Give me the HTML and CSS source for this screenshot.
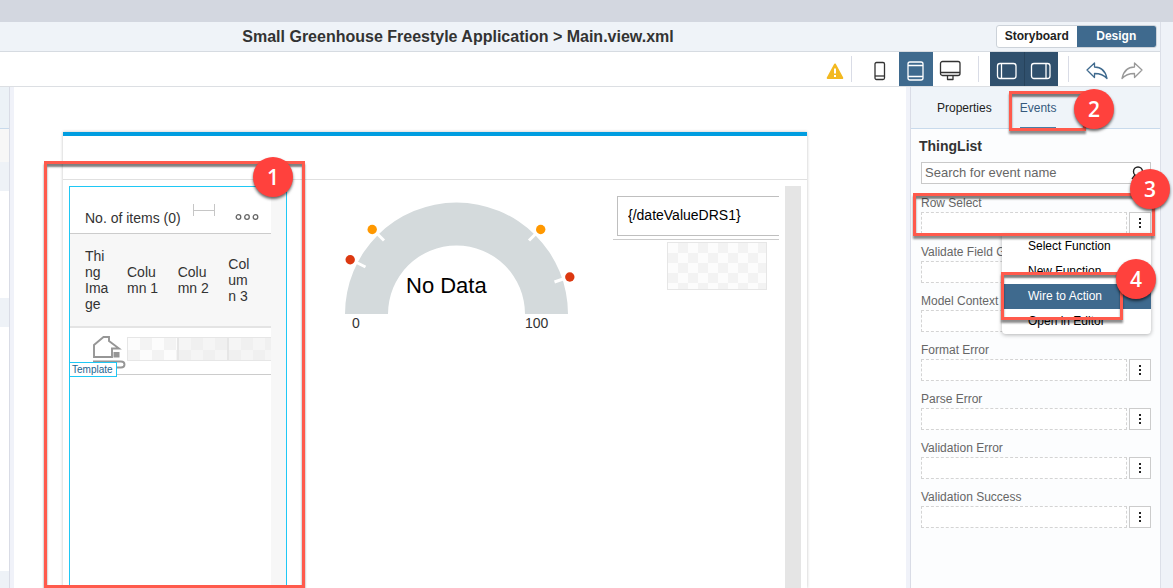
FILE: index.html
```html
<!DOCTYPE html>
<html lang="en">
<head>
<meta charset="utf-8">
<title>Small Greenhouse Freestyle Application</title>
<link rel="stylesheet" href="styles.css">
</head>
<body>
<div class="window-strip"></div>
<div class="shell">
  <div class="app">
    <header class="header">
      <h1 class="title">Small Greenhouse Freestyle Application &gt; Main.view.xml</h1>
      <div class="segmented">
        <button class="segment" type="button">Storyboard</button>
        <button class="segment segment-on" type="button">Design</button>
      </div>
    </header>
    <div class="toolbar">
      <svg class="warning" width="18" height="18" viewBox="0 0 18 18" aria-hidden="true"><path d="M9 2.500 16.300 16H1.700Z" fill="#f3b920" stroke="#f3b920" stroke-width="2" stroke-linejoin="round"/><path d="M9 6.500v5M9 13v2" stroke="#fff" stroke-width="2"/></svg>
      <span class="divider"></span>
      <button class="tool tool-phone" type="button" aria-label="Phone"><svg width="24" height="24" viewBox="0 0 24 24"><rect x="7" y="3.500" width="9.500" height="17" rx="1.500"/><path d="M7 17h9.500"/></svg></button>
      <button class="tool tool-on" type="button" aria-label="Tablet"><svg width="24" height="24" viewBox="0 0 24 24"><rect x="4" y="3" width="15" height="18" rx="2"/><path d="M4 6.500h15M4 17.500h15"/></svg></button>
      <button class="tool" type="button" aria-label="Desktop"><svg width="24" height="24" viewBox="0 0 24 24"><rect x="1.500" y="2.500" width="19.500" height="14" rx="2"/><path d="M1.500 13.500h19.500M8.500 17v3.500h5.500V17"/></svg></button>
      <span class="divider divider-wide"></span>
      <button class="tool tool-dark" type="button" aria-label="Left pane"><svg width="24" height="24" viewBox="0 0 24 24"><rect x="2.500" y="4.500" width="18.500" height="15" rx="2.500"/><path d="M6.500 4.500v15"/></svg></button>
      <button class="tool tool-dark tool-next" type="button" aria-label="Right pane"><svg width="24" height="24" viewBox="0 0 24 24"><rect x="2.500" y="4.500" width="18.500" height="15" rx="2.500"/><path d="M17 4.500v15"/></svg></button>
      <span class="divider divider-last"></span>
      <button class="tool tool-undo" type="button" aria-label="Undo"><svg width="24" height="24" viewBox="0 0 24 24"><path d="M2 11 9.500 4v4c6.500 0 11 4 12.500 11.500-3.500-4-7.500-5-12.500-5V18.500Z"/></svg></button>
      <button class="tool tool-redo" type="button" aria-label="Redo"><svg width="24" height="24" viewBox="0 0 24 24"><path d="M22 11 14.500 4v4C8 8 3.500 12 2 19.500c3.500-4 7.500-5 12.500-5V18.500Z"/></svg></button>
    </div>
    <div class="workspace">
      <div class="outline">
        <div class="outline-head"></div>
        <div class="outline-filter"></div>
        <div class="outline-row"></div>
        <div class="outline-gap"></div>
        <div class="outline-row"></div>
        <div class="outline-fill"></div>
        <div class="outline-last"></div>
      </div>
      <div class="splitter"></div>
      <main class="canvas">
        <div class="device">
          <div class="device-header"></div>
          <div class="device-body">
            <section class="thing-list">
              <div class="list-main">
                <div class="list-bar">
                  <span class="list-title">No. of items (0)</span>
                  <svg class="spacer" width="22" height="12" viewBox="0 0 22 12"><path d="M.5 0v12M21.500 0v12M0 6.500h22" stroke="#c6c6c6"/></svg>
                  <svg class="more" width="24" height="8" viewBox="0 0 24 8" fill="none" stroke="#666" stroke-width="1.300"><circle cx="3.500" cy="4" r="2.300"/><circle cx="12" cy="4" r="2.300"/><circle cx="20.500" cy="4" r="2.300"/></svg>
                </div>
                <table class="grid">
                  <colgroup><col class="col-image"><col><col><col></colgroup>
                  <thead>
                    <tr><th>Thing Image</th><th>Column 1</th><th>Column 2</th><th>Column 3</th></tr>
                  </thead>
                  <tbody>
                    <tr>
                      <td class="cell-image"><svg class="house" width="34" height="36" viewBox="0 0 34 36" fill="none" stroke="#969696" stroke-width="1.900"><path d="M27 15.500h1L18 8V4h-5.500L3 12v12h18v-8.500h7"/><rect x="22.500" y="19" width="6" height="5.500" fill="#969696" stroke="none"/><path d="M2 28.500h28q3.500 0 3.500 3t-3.500 3h-8"/></svg></td>
                      <td><div class="checker"></div></td>
                      <td><div class="checker checker-dim"></div></td>
                      <td><div class="checker checker-dim"></div></td>
                    </tr>
                  </tbody>
                </table>
              </div>
              <div class="list-scroll"></div>
              <span class="template-tag">Template</span>
            </section>
            <section class="chart">
              <svg width="240" height="136" viewBox="340 198 240 136">
                <path d="M345 314a111.500 111.500 0 0 1 223 0h-43a68.500 68.500 0 0 0-137 0Z" fill="#d4dadc"/>
                <path d="M376 232.500l8 8M356.500 262.500l9 4.500M537 232.500l-8 8M566 278l-11.500 4" stroke="#fff" stroke-width="3"/>
                <g fill="#ff9800"><circle cx="372.200" cy="229.500" r="4.700"/><circle cx="540.700" cy="229.500" r="4.700"/></g>
                <g fill="#dc3810"><circle cx="350.200" cy="259.700" r="4.700"/><circle cx="569.800" cy="277" r="4.700"/></g>
                <text class="gauge-value" x="406" y="293">No Data</text>
                <text class="gauge-scale" x="352" y="328">0</text>
                <text class="gauge-scale" x="525" y="328">100</text>
              </svg>
            </section>
            <section class="form">
              <div class="form-row"><input class="date-input" type="text" value="{/dateValueDRS1}" aria-label="Date value"></div>
              <div class="checker checker-large"></div>
            </section>
            <div class="device-scroll"></div>
          </div>
        </div>
      </main>
      <div class="splitter"></div>
      <aside class="panel">
        <nav class="tabs">
          <button class="tab" type="button">Properties</button>
          <button class="tab tab-on" type="button">Events</button>
        </nav>
        <div class="panel-body">
          <h2 class="panel-title">ThingList</h2>
          <div class="search">
            <input class="search-input" type="text" placeholder="Search for event name" aria-label="Search for event name">
            <svg class="search-icon" width="14" height="14" viewBox="0 0 14 14" fill="none" stroke="#222" stroke-width="1.400"><circle cx="7" cy="5.500" r="4.500"/><path d="M4 9 1 13"/></svg>
          </div>
          <div class="event">
            <label class="event-label" for="e1">Row Select</label>
            <div class="event-line"><input class="event-input" id="e1" type="text"><button class="event-more" type="button" aria-label="Row Select options"><i></i><i></i><i></i></button></div>
            <div class="menu" role="menu">
              <button class="menu-item" role="menuitem" type="button">Select Function</button>
              <button class="menu-item" role="menuitem" type="button">New Function</button>
              <button class="menu-item menu-item-on" role="menuitem" type="button">Wire to Action</button>
              <button class="menu-item" role="menuitem" type="button">Open in Editor</button>
            </div>
          </div>
          <div class="event">
            <label class="event-label" for="e2">Validate Field Group</label>
            <div class="event-line"><input class="event-input" id="e2" type="text"><button class="event-more" type="button" aria-label="Validate Field Group options"><i></i><i></i><i></i></button></div>
          </div>
          <div class="event">
            <label class="event-label" for="e3">Model Context</label>
            <div class="event-line"><input class="event-input" id="e3" type="text"><button class="event-more" type="button" aria-label="Model Context options"><i></i><i></i><i></i></button></div>
          </div>
          <div class="event">
            <label class="event-label" for="e4">Format Error</label>
            <div class="event-line"><input class="event-input" id="e4" type="text"><button class="event-more" type="button" aria-label="Format Error options"><i></i><i></i><i></i></button></div>
          </div>
          <div class="event">
            <label class="event-label" for="e5">Parse Error</label>
            <div class="event-line"><input class="event-input" id="e5" type="text"><button class="event-more" type="button" aria-label="Parse Error options"><i></i><i></i><i></i></button></div>
          </div>
          <div class="event">
            <label class="event-label" for="e6">Validation Error</label>
            <div class="event-line"><input class="event-input" id="e6" type="text"><button class="event-more" type="button" aria-label="Validation Error options"><i></i><i></i><i></i></button></div>
          </div>
          <div class="event">
            <label class="event-label" for="e7">Validation Success</label>
            <div class="event-line"><input class="event-input" id="e7" type="text"><button class="event-more" type="button" aria-label="Validation Success options"><i></i><i></i><i></i></button></div>
          </div>
        </div>
      </aside>
    </div>
  </div>
  <div class="gutter"></div>
</div>
<div class="mark mark-list"></div><span class="step step-list">1</span>
<div class="mark mark-tab"></div><span class="step step-tab">2</span>
<div class="mark mark-row"></div><span class="step step-row">3</span>
<div class="mark mark-action"></div><span class="step step-action">4</span>
</body>
</html>
```
FILE: styles.css
```css
* { box-sizing: border-box; }

body {
  margin: 0;
  height: 100vh;
  display: flex;
  flex-direction: column;
  position: relative;
  overflow: hidden;
  background: #fff;
  color: #333;
  font-family: "Liberation Sans", Arial, sans-serif;
  font-size: 12px;
}

button, input { font: inherit; color: inherit; margin: 0; border-radius: 0; }
button { padding: 0; border: 0; background: none; }
svg { display: block; flex: none; }

.window-strip { height: 22px; flex: none; background: #d3d7e0; }
.shell { flex: 1; min-height: 0; display: flex; }
.app { flex: 1; min-width: 0; display: flex; flex-direction: column; }
.gutter { width: 13px; background: #eff2f8; border-left: 1px solid #dcdfe8; }

/* header */
.header {
  height: 30px;
  flex: none;
  display: flex;
  align-items: center;
  padding-right: 3px;
  background: #eff3f8;
  border-bottom: 1px solid #d6dbe1;
}
.title {
  flex: 1;
  margin: 0;
  padding-right: 80px;
  text-align: center;
  font-size: 16px;
  line-height: 20px;
  white-space: nowrap;
}
.segmented {
  display: flex;
  width: 161px;
  height: 23px;
  border: 1px solid #ccd2d9;
  border-radius: 3px;
  overflow: hidden;
  background: #fff;
}
.segment { flex: 1; padding-bottom: 1px; font-weight: bold; color: #222; }
.segment-on { background: #3f6a8e; color: #fff; }

/* toolbar */
.toolbar {
  height: 35px;
  flex: none;
  display: flex;
  align-items: center;
  justify-content: flex-end;
  padding-right: 11px;
  background: #fff;
  border-bottom: 1px solid #dcdfe3;
}
.warning { margin: 4px 7px 0 0; }
.divider { width: 1px; height: 26px; background: #d9dce6; margin-right: 10px; }
.divider-wide { margin: 0 11px 0 10px; }
.divider-last { margin: 0 10px; }
.tool {
  width: 35px;
  height: 34px;
  display: flex;
  align-items: center;
  justify-content: center;
  padding-top: 3px;
  color: #333;
}
.tool svg { fill: none; stroke: currentColor; stroke-width: 1.3; stroke-linejoin: round; }
.tool-phone { margin-right: 2px; }
.tool-on { width: 34px; background: #3f6a8e; color: #fff; }
.tool-dark { width: 34px; background: #30506d; color: #fff; }
.tool-next { box-shadow: inset 1px 0 #27435c; }
.tool-undo { color: #3f6a8e; }
.tool-redo { color: #999; }

/* workspace */
.workspace { flex: 1; min-height: 0; display: flex; }
.outline {
  width: 10px;
  flex: none;
  display: flex;
  flex-direction: column;
  border-right: 1px solid #d9dce6;
}
.outline-head { height: 42px; background: #ecf2f7; border-bottom: 1px solid #c8daec; }
.outline-filter { height: 33px; background: #f7f7f7; }
.outline-row { height: 29px; background: #eef2f7; }
.outline-gap { height: 107px; }
.outline-fill { flex: 1; }
.outline-last { height: 17px; background: #eef2f7; }
.splitter { width: 4px; flex: none; background: #f0f2f9; }

.canvas {
  flex: 1;
  min-width: 0;
  display: flex;
  padding: 45px 99px 0 49px;
}
.device {
  flex: 1;
  min-width: 0;
  display: flex;
  flex-direction: column;
  border-top: 4px solid #009de0;
  box-shadow: 0 0 3px rgba(0, 0, 0, 0.25);
}
.device-header { height: 44px; flex: none; border-bottom: 1px solid #e0e0e0; }
.device-body {
  flex: 1;
  min-height: 0;
  display: grid;
  grid-template-columns: 218px minmax(0, 1fr) 166px 6px 16px;
  padding: 6px 6px 0;
}
.device-scroll { grid-column: 5; background: #e5e5e5; }

/* list */
.thing-list {
  position: relative;
  display: flex;
  min-height: 0;
  border: 1px solid #1fc8f5;
  border-bottom: 0;
}
.list-main { flex: 1; min-width: 0; }
.list-scroll { width: 15px; background: #f7f7f7; }
.list-bar {
  height: 47px;
  display: flex;
  align-items: center;
  padding: 0 12px 0 15px;
  border-bottom: 1px solid #ccc;
}
.list-title { padding-top: 16px; font-size: 14px; line-height: 16px; white-space: nowrap; }
.spacer { margin-left: 12px; }
.more { margin: 14px 0 0 auto; }
.grid { width: 100%; table-layout: fixed; border-collapse: separate; border-spacing: 0; }
.col-image { width: 49px; }
.grid th {
  height: 94px;
  padding: 0 8px;
  background: #f7f7f7;
  border-bottom: 2px solid #e4e4e4;
  font-size: 14px;
  line-height: 16px;
  font-weight: normal;
  text-align: left;
  overflow-wrap: anywhere;
}
.grid th:first-child { padding-left: 15px; }
.grid th:last-child { padding-right: 17px; }
.grid td { height: 47px; padding: 0 0 4px 8px; border-bottom: 1px solid #ccc; }
.grid td .checker { margin-right: -8px; }
.grid td:last-child .checker { margin-right: 0; border-right: 0; }
.grid .cell-image { padding: 5px 0 0 21px; vertical-align: top; }
.house { overflow: visible; }
.template-tag {
  position: absolute;
  left: -1px;
  top: 175px;
  padding: 1px 3px 0 2px;
  border: 1px solid #1fc8f5;
  background: #fff;
  color: #1c6590;
  font-size: 10px;
  line-height: 12px;
}

.checker {
  height: 24px;
  border: 1px solid #e6e6e6;
  background: repeating-conic-gradient(#f3f3f3 0 25%, #fcfcfc 0 50%) 0 0 / 24px 24px;
}
.checker-dim { background: repeating-conic-gradient(#f0f0f0 0 25%, #f5f5f5 0 50%) 0 0 / 24px 24px; }
.checker-large {
  width: 100px;
  height: 48px;
  margin: 2px 0 0 54px;
  background-size: 20px 20px;
}

/* gauge and form */
.chart { padding: 12px 0 0 53px; }
.gauge-value { font-size: 22px; fill: #000; }
.gauge-scale { font-size: 14px; fill: #333; }
.form { padding-top: 10px; }
.form-row { padding: 0 0 3px 4px; border-bottom: 1px solid #ccc; }
.date-input {
  display: block;
  width: 100%;
  height: 40px;
  padding: 0 0 2px 10px;
  border: 1px solid #bfbfbf;
  border-right: 0;
  background: #fff;
  color: #000;
  font-size: 14px;
}

/* events panel */
.panel {
  width: 250px;
  flex: none;
  background: #fcfdfe;
  border-left: 1px solid #d9dce6;
}
.tabs {
  height: 42px;
  display: flex;
  gap: 28px;
  padding-left: 26px;
  background: #eff4f9;
  border-bottom: 1px solid #c8daec;
}
.tab { height: 42px; padding-top: 2px; color: #222; border-bottom: 2px solid transparent; }
.tab-on { color: #35597c; border-bottom-color: #4a7da3; }
.panel-body { padding: 8px 9px 0 8px; }
.panel-title { margin: 0 0 7px; font-size: 14px; line-height: 18px; }
.search {
  display: flex;
  align-items: center;
  height: 22px;
  margin: 0 0 10px 2px;
  padding: 0 5px 0 3px;
  border: 1px solid #c9c9c9;
  background: #fff;
}
.search-input {
  flex: 1;
  min-width: 0;
  height: 20px;
  padding: 0 0 2px;
  border: 0;
  background: none;
  font-size: 13px;
}
.search-input::placeholder { color: #666; opacity: 1; }
.event { position: relative; margin: 0 0 9px 2px; }
.event-label { display: block; color: #666; line-height: 18px; white-space: nowrap; }
.event-line { display: flex; gap: 2px; }
.event-input {
  flex: 1;
  min-width: 0;
  height: 22px;
  padding: 0 4px;
  border: 1px dashed #d4d4d4;
  background: #fff;
}
.event-more {
  width: 22px;
  height: 22px;
  display: flex;
  flex-direction: column;
  align-items: center;
  justify-content: center;
  gap: 2px;
  border: 1px solid #ccc;
  background: #fff;
}
.event-more i { width: 2px; height: 2px; background: #222; }
.menu {
  position: absolute;
  z-index: 1;
  right: 0;
  top: 40px;
  width: 149px;
  background: #fff;
  border-radius: 0 0 4px 4px;
  box-shadow: 0 1px 4px rgba(0, 0, 0, 0.3);
}
.menu-item {
  display: block;
  width: 100%;
  height: 25px;
  padding: 0 0 2px 26px;
  text-align: left;
  color: #000;
}
.menu-item-on { background: #3f6a8e; color: #fff; }

/* tutorial callouts */
.mark {
  position: absolute;
  z-index: 2;
  border: 3px solid #ff5a4c;
  box-shadow: 0 3px 2px rgba(0, 0, 0, 0.45), inset 0 3px 2px rgba(0, 0, 0, 0.5);
}
.mark-list { left: 44px; top: 161px; bottom: 0; width: 261px; }
.mark-tab { left: 1009px; top: 91px; width: 77px; height: 40px; }
.mark-row { left: 913px; top: 193px; width: 242px; height: 43px; }
.mark-action { left: 1001px; top: 272px; width: 122px; height: 48px; }
.step {
  position: absolute;
  z-index: 3;
  width: 40px;
  height: 40px;
  border-radius: 50%;
  background: #ff413d;
  box-shadow: 0 2px 3px rgba(0, 0, 0, 0.6);
  color: #fff;
  font-family: "Open Sans", sans-serif;
  font-size: 21px;
  font-weight: 600;
  line-height: 40px;
  text-align: center;
}
.step-list { left: 253px; top: 157px; }
.step-tab { left: 1074px; top: 89px; }
.step-row { left: 1130px; top: 169px; }
.step-action { left: 1116px; top: 259px; }
```
